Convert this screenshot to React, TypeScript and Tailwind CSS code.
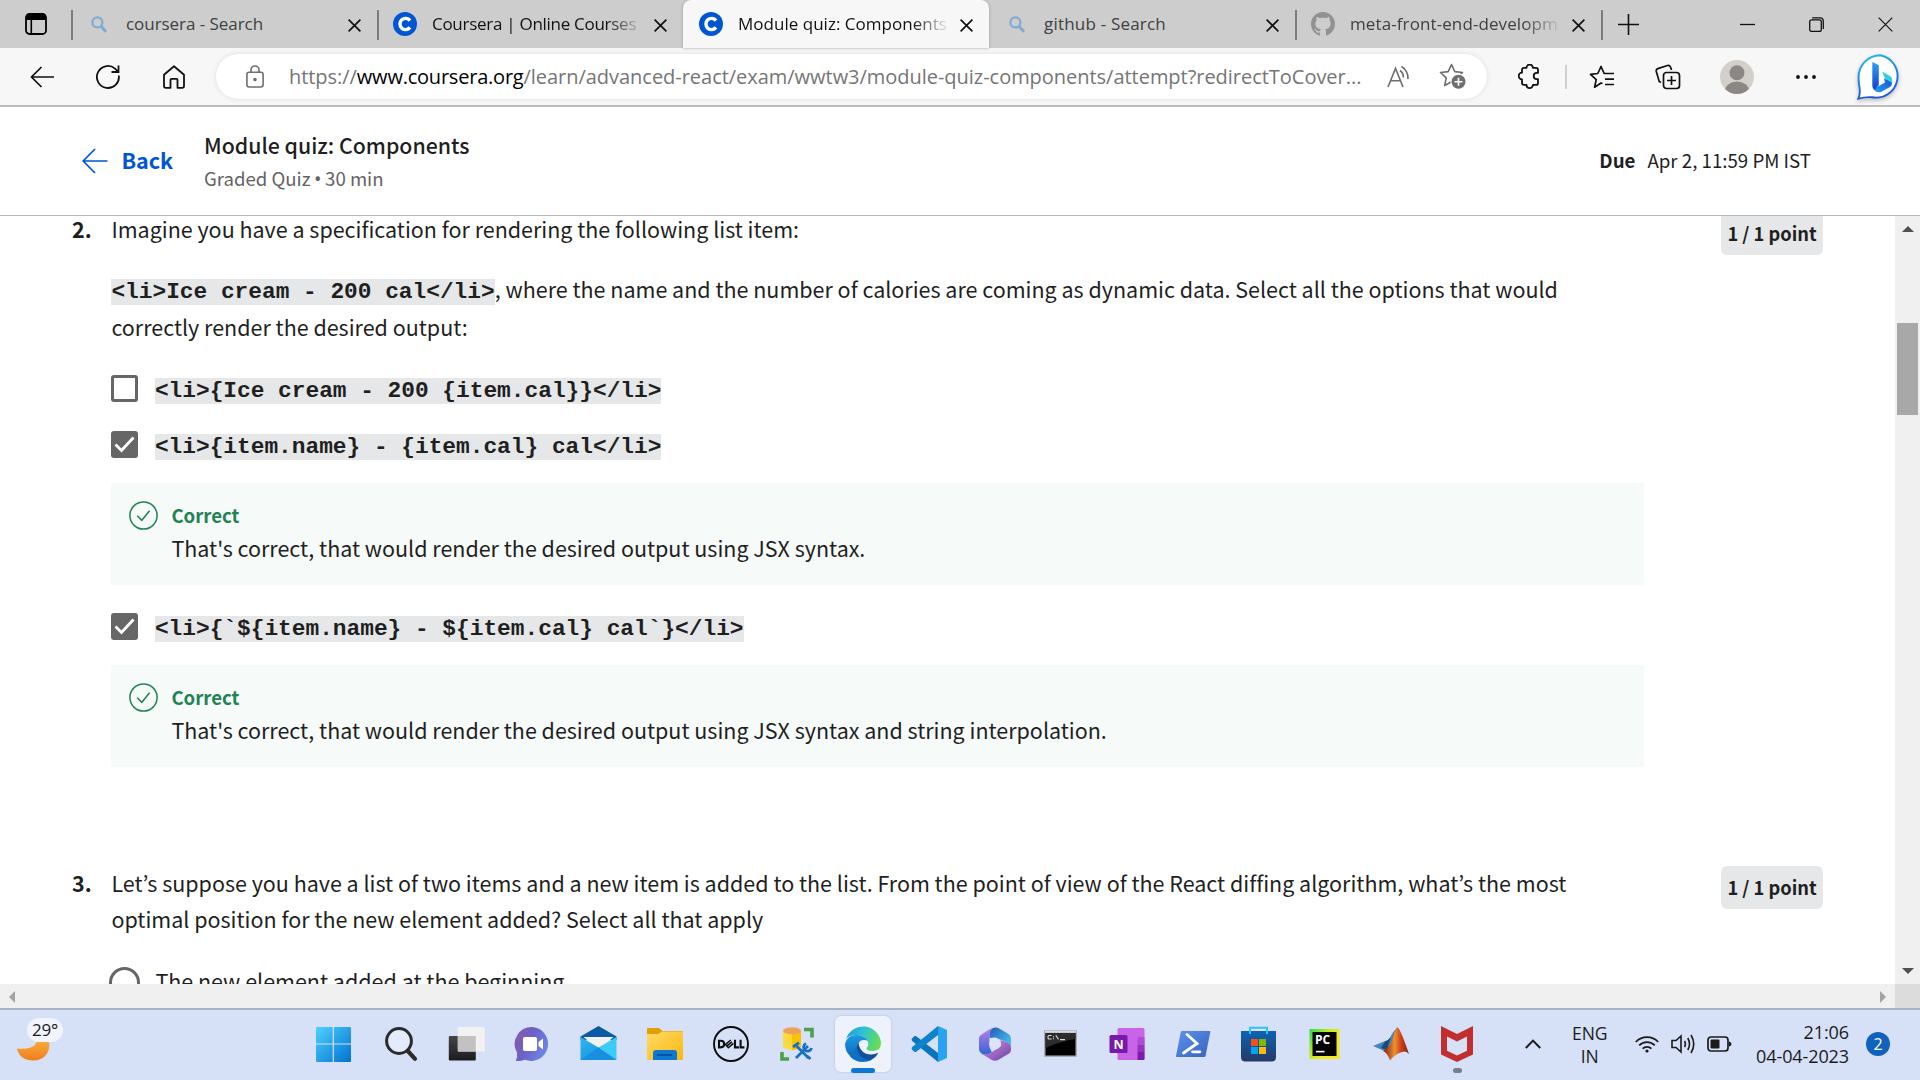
import React from "react";

const SANS = "font-['Noto_Sans_CJK_KR','Open_Sans',sans-serif]";
const UI = "font-['Open_Sans','Noto_Sans',sans-serif]";

function SearchGlyph() {
  return (
    <svg width="16" height="17" viewBox="0 0 16 17" fill="none" stroke="#7fabd3" strokeWidth="2.2" className="shrink-0">
      <circle cx="6.4" cy="6.4" r="5" />
      <path d="M10 10.3 15 15.8" strokeWidth="2.8" />
    </svg>
  );
}

function CourseraGlyph() {
  return (
    <svg width="24" height="24" viewBox="0 0 24 24" className="shrink-0">
      <circle cx="12" cy="12" r="12" fill="#0056d2" />
      <path d="M17 8.6A5.6 5.6 0 1 0 17 15.4" fill="none" stroke="#fff" strokeWidth="3.4" />
    </svg>
  );
}

function GithubGlyph() {
  return (
    <svg width="24" height="24" viewBox="0 0 16 16" fill="#8f9193" className="shrink-0">
      <path d="M8 0C3.58 0 0 3.58 0 8c0 3.54 2.29 6.53 5.47 7.59.4.07.55-.17.55-.38 0-.19-.01-.82-.01-1.49-2.01.37-2.53-.49-2.69-.94-.09-.23-.48-.94-.82-1.13-.28-.15-.68-.52-.01-.53.63-.01 1.08.58 1.23.82.72 1.21 1.87.87 2.33.66.07-.52.28-.87.51-1.07-1.78-.2-3.64-.89-3.64-3.95 0-.87.31-1.59.82-2.15-.08-.2-.36-1.02.08-2.12 0 0 .67-.21 2.2.82.64-.18 1.32-.27 2-.27s1.36.09 2 .27c1.53-1.04 2.2-.82 2.2-.82.44 1.1.16 1.92.08 2.12.51.56.82 1.27.82 2.15 0 3.07-1.87 3.75-3.65 3.95.29.25.54.73.54 1.48 0 1.07-.01 1.93-.01 2.2 0 .21.15.46.55.38A8.01 8.01 0 0 0 16 8c0-4.42-3.58-8-8-8z" />
    </svg>
  );
}

function CloseGlyph({ size = 13, sw = 1.7 }: { size?: number; sw?: number }) {
  return (
    <svg width={size} height={size} viewBox="0 0 13 13" stroke="#111" strokeWidth={sw} className="shrink-0">
      <path d="M.6.6 12.4 12.4M12.4.6.6 12.4" />
    </svg>
  );
}

type TabProps = { icon: React.ReactNode; title: string; track: string; dark?: boolean; active?: boolean; fade?: boolean; sep?: boolean };

function Tab({ icon, title, track, dark, active, fade, sep }: TabProps) {
  return (
    <div className={`relative flex h-12 w-[306px] items-center pl-4 pr-4 ${active ? "z-10 rounded-t-lg bg-[#f7f7f7] shadow-[0_0_3px_#999]" : ""}`}>
      {sep && <span className="absolute left-0 top-[10px] h-[30px] w-[1.5px] bg-[#7c7c7c]" />}
      <div className="flex w-6 shrink-0 items-center justify-start">{icon}</div>
      <div
        className={`ml-[15px] w-[212px] whitespace-nowrap text-[17px] leading-6 ${track} ${dark ? "text-[#111]" : "text-[#404040]"} ${fade ? "[mask-image:linear-gradient(to_right,#000_82%,transparent)]" : ""}`}
      >
        {title}
      </div>
      <div className="ml-auto pt-0.5">
        <CloseGlyph />
      </div>
    </div>
  );
}

function TabStrip() {
  return (
    <div className="flex h-12 bg-[#cdcdcd]">
      <div className="flex w-[71px] items-center pl-[25px]">
        <svg width="22" height="22" viewBox="0 0 22 22">
          <rect x="1" y="1" width="20" height="20" rx="3.5" fill="none" stroke="#000" strokeWidth="1.8" />
          <path d="M1 3.5Q1 1 4 1H18Q21 1 21 3.5V7H1Z" fill="#000" />
          <path d="M6.3 7V21" stroke="#000" strokeWidth="1.6" />
        </svg>
      </div>
      <Tab sep icon={<span className="pl-1"><SearchGlyph /></span>} title="coursera - Search" track="tracking-[-0.05px]" />
      <Tab sep icon={<CourseraGlyph />} title="Coursera | Online Courses" track="tracking-[-0.28px]" dark fade />
      <Tab active icon={<CourseraGlyph />} title="Module quiz: Components" track="tracking-[0.02px]" dark fade />
      <Tab icon={<span className="pl-1"><SearchGlyph /></span>} title="github - Search" track="tracking-[0.2px]" />
      <Tab sep icon={<GithubGlyph />} title="meta-front-end-developm" track="tracking-[0.1px]" fade />
      <div className="relative flex flex-1 items-center pl-[17px]">
        <span className="absolute left-0 top-[10px] h-[30px] w-[1.5px] bg-[#7c7c7c]" />
        <svg width="21" height="21" viewBox="0 0 21 21" stroke="#111" strokeWidth="1.6">
          <path d="M10.5 0V21M0 10.5H21" />
        </svg>
        <div className="ml-auto flex items-center gap-[54px] pr-[27px]">
          <svg width="15" height="15" viewBox="0 0 15 15" stroke="#111" strokeWidth="1.3"><path d="M0 7.5H15" /></svg>
          <svg width="15" height="15" viewBox="0 0 15 15" fill="none" stroke="#111" strokeWidth="1.3">
            <rect x=".7" y="2.9" width="11.6" height="11.6" rx="2" />
            <path d="M3.2.8H11Q14.3.8 14.3 4V12" />
          </svg>
          <CloseGlyph size={15} sw={1} />
        </div>
      </div>
    </div>
  );
}

const STAR = "M12.5 1.5 15.8 8.6 23.5 9.5 17.8 14.8 19.3 22.5 12.5 18.7 5.7 22.5 7.2 14.8 1.5 9.5 9.2 8.6Z";

function Toolbar() {
  return (
    <div className="flex h-[59px] items-center border-b-2 border-[#bbbcbd] bg-[#f7f7f7] pl-[30px]">
      <svg width="24" height="22" viewBox="0 0 24 22" fill="none" stroke="#111" strokeWidth="1.7" className="mr-[42px]">
        <path d="M24 11H1.5M11.5 1 1.5 11 11.5 21" />
      </svg>
      <svg width="24" height="24" viewBox="0 0 24 24" fill="none" stroke="#111" strokeWidth="1.8" className="mr-[43px]">
        <path d="M22.8 10.5A11 11 0 1 1 19 3.6L22 6.6M22.5 .5V7H15.5" />
      </svg>
      <svg width="22" height="24" viewBox="0 0 22 24" fill="none" stroke="#111" strokeWidth="1.8" strokeLinejoin="round" className="mr-[31px]">
        <path d="M1 9.8 11 1.2 21 9.8V21Q21 22.8 19.2 22.8H14.5V14.8Q14.5 13.8 13.5 13.8H8.5Q7.5 13.8 7.5 14.8V22.8H2.8Q1 22.8 1 21Z" />
      </svg>
      <div className="flex h-[45px] w-[1271px] items-center rounded-full bg-white pl-[30px] pr-[20px] shadow-[0_0_5px_#ddd]">
        <svg width="18" height="23" viewBox="0 0 18 23" fill="none" stroke="#6e6e6e" strokeWidth="1.6" className="mr-[25px]">
          <rect x=".9" y="7.2" width="16.2" height="14.8" rx="2.2" />
          <path d="M5 7V5A4 4 0 0 1 13 5V7" />
          <circle cx="9" cy="14.6" r="1" fill="#6e6e6e" />
        </svg>
        <div className="w-[1076px] whitespace-nowrap text-[20px] leading-7 tracking-[-0.03px] text-[#757575]">
          <span className="tracking-[-0.05px]">https://</span><span className="tracking-[-0.22px] text-black">www.coursera.org</span>/learn/advanced-react/exam/wwtw3/module-quiz-components/attempt?redirectToCover...
        </div>
        <svg width="24" height="24" viewBox="0 0 24 24" fill="none" stroke="#6e6e6e" strokeWidth="1.6" className="ml-[22px]">
          <path d="M1 22 8.5 3.5 16 22M3.6 15.8H13.4M13 5.5Q16.5 8 16.3 12.5M14.5 1.5Q21.5 6 21 14" />
        </svg>
        <svg width="28" height="27" viewBox="0 0 28 27" className="ml-[28px]">
          <path d={STAR} fill="none" stroke="#6e6e6e" strokeWidth="1.6" strokeLinejoin="round" />
          <circle cx="19.5" cy="18.7" r="8" fill="#fff" />
          <circle cx="19.5" cy="18.7" r="7" fill="#6e6e6e" />
          <path d="M19.5 14.7V22.7M15.5 18.7H23.5" stroke="#fff" strokeWidth="1.6" />
        </svg>
      </div>
      <div className="flex flex-1 items-center">
        <svg width="24" height="25" viewBox="0 0 24 25" fill="none" stroke="#111" strokeWidth="1.8" strokeLinejoin="round" className="ml-[31px]">
          <path d="M6 3.8H8.5A3.2 3.2 0 0 1 14.9 3.8H18Q20 3.8 20 5.8V8.9H18.8A3.1 3.1 0 0 0 18.8 15.1H20V18.9Q20 20.9 18 20.9H14.9A3.2 3.2 0 0 1 8.5 20.9H6Q4 20.9 4 18.9V15.3A3.3 3.3 0 0 1 4 8.7V5.8Q4 3.800 6 3.8Z" />
        </svg>
        <span className="ml-[23px] h-6 w-[1.5px] bg-[#cfcfcf]" />
        <svg width="26" height="24" viewBox="0 0 26 24" fill="none" stroke="#111" strokeWidth="1.7" strokeLinejoin="round" className="ml-[22px]">
          <path d="M13.5 18.5 12 18 5.6 22.2 7.2 14.6 1.5 9.3 8.8 8.5 12 1.5 15.2 8.5H25M16 14.2H25M16 19.5H25" />
        </svg>
        <svg width="26" height="26" viewBox="0 0 26 26" fill="none" stroke="#111" strokeWidth="1.7" className="ml-[40px]">
          <rect x="8.5" y="8.5" width="16" height="16" rx="3" />
          <path d="M16.5 12V21M12 16.5H21M6 18.5 4.2 17.5 1.3 7.5Q.8 5.3 2.8 4.6L12.5 1.5Q14.6 1 15.5 3L16.5 6" />
        </svg>
        <svg width="34" height="34" viewBox="0 0 34 34" className="ml-[39px]">
          <defs><clipPath id="av"><circle cx="17" cy="17" r="17" /></clipPath></defs>
          <g clipPath="url(#av)">
            <rect width="34" height="34" fill="#d3d0cc" />
            <circle cx="17" cy="12.8" r="7.5" fill="#8a8784" />
            <ellipse cx="17" cy="31" rx="12" ry="9.5" fill="#8a8784" />
          </g>
        </svg>
        <svg width="20" height="4" viewBox="0 0 20 4" fill="#111" className="ml-[42px]">
          <circle cx="2" cy="2" r="1.9" /><circle cx="10" cy="2" r="1.9" /><circle cx="18" cy="2" r="1.9" />
        </svg>
        <svg width="46" height="46" viewBox="0 0 46 46" className="ml-[41px] drop-shadow-[0_2px_2px_rgba(0,0,0,0.25)]">
          <defs>
            <linearGradient id="bg1" x1="0" y1="0" x2=".3" y2="1"><stop offset="0" stopColor="#1fc0f0" /><stop offset="1" stopColor="#1a55d8" /></linearGradient>
            <linearGradient id="bg2" x1="0" y1="0" x2="0" y2="1"><stop offset="0" stopColor="#2f9ff4" /><stop offset="1" stopColor="#1540d0" /></linearGradient>
            <linearGradient id="bg3" x1="0" y1="1" x2="1" y2="0"><stop offset="0" stopColor="#1fa0f0" /><stop offset="1" stopColor="#1b52d8" /></linearGradient>
          </defs>
          <path d="M23.3 1.2A21.3 21.3 0 1 1 15 43.2Q8 42.8 1.4 44.6 4 39 2 30.5 1.6 27 1.6 23A21.8 21.8 0 0 1 23.3 1.2Z" fill="#fff" stroke="url(#bg1)" strokeWidth="1.9" />
          <path d="M27 24.5 35 27.5Q35.5 31 33 33L24 38Q19 39 16.5 35L28 28.5Z" fill="url(#bg3)" />
          <path d="M25 17.5 33 22Q36.5 25 34.8 29 33 26.5 28.5 25.5Z" fill="#2fd0dc" />
          <path d="M15.3 8 21.8 11.3V31L17.5 36Q15.3 34.5 15.3 32Z" fill="url(#bg2)" />
        </svg>
      </div>
    </div>
  );
}

function QuizHeader() {
  return (
    <div className={`flex h-[109px] border-b border-[#bbb] bg-white pl-[82px] pr-[109px] text-[#1f1f1f] ${SANS}`}>
      <div className="flex w-[122px] items-center text-[#0056d2]">
        <svg width="26" height="26" viewBox="0 0 26 26" fill="none" stroke="#0056d2" strokeWidth="1.7">
          <path d="M25.5 13H1.2M13 1 1.2 13 13 25" />
        </svg>
        <span className="-mt-0.5 ml-[13.5px] text-[21.6px] font-bold leading-8 tracking-[-0.1px]">Back</span>
      </div>
      <div className="pt-[21px]">
        <div className="text-[21.3px] font-medium leading-[33px]">Module quiz: Components</div>
        <div className="text-[18.6px] leading-[33px] text-[#636363]">
          Graded Quiz<span className="px-[3.5px] font-['Open_Sans',sans-serif] text-[20px]">•</span>30 min
        </div>
      </div>
      <div className="-mt-0.5 ml-auto flex items-center text-[18.7px] leading-8">
        <span className="font-bold">Due</span>
        <span className="ml-3">Apr 2, 11:59 PM IST</span>
      </div>
    </div>
  );
}

function Code({ children }: { children: React.ReactNode }) {
  return (
    <code className="whitespace-pre bg-[#e5e7e8] font-['Liberation_Mono',monospace] text-[22.84px] font-bold leading-[26px]">
      {children}
    </code>
  );
}

function Checkbox({ checked }: { checked?: boolean }) {
  return (
    <span className={`flex size-[27px] shrink-0 items-center justify-center rounded-[3px] border-[3px] border-[#666] ${checked ? "bg-[#666]" : "bg-white"}`}>
      {checked && (
        <svg width="21" height="17" viewBox="0 0 21 17" fill="none" stroke="#fff" strokeWidth="2.8" className="shrink-0">
          <path d="M1.5 8.5 7.5 14.5 19.5 1.5" />
        </svg>
      )}
    </span>
  );
}

function Option({ checked, code }: { checked?: boolean; code: string }) {
  return (
    <div className="flex h-[27px] items-center">
      <Checkbox checked={checked} />
      <span className="ml-[16.5px] mt-[5px] flex h-[26px] bg-[#e5e7e8]"><Code>{code}</Code></span>
    </div>
  );
}

function Feedback({ text }: { text: string }) {
  return (
    <div className="flex h-[102px] w-[1533px] bg-[#f6faf9] pl-[18px]">
      <svg width="29" height="29" viewBox="0 0 29 29" fill="none" stroke="#1f8354" strokeWidth="1.5" className="mt-[18px]">
        <circle cx="14.5" cy="14.5" r="13.6" />
        <path d="M8.2 14.7 12.8 19.3 20.6 9.8" />
      </svg>
      <div className="ml-[13px] pt-[15px]">
        <div className="text-[18.6px] font-bold leading-[33px] text-[#1f8354]">Correct</div>
        <div className="text-[21.5px] leading-[33px]">{text}</div>
      </div>
    </div>
  );
}

function PointBadge() {
  return (
    <div className="flex h-[43px] w-[102px] shrink-0 items-center justify-center rounded-md bg-[#e5e7e8] pb-0.5 text-[18.3px] font-bold leading-8">
      1 / 1 point
    </div>
  );
}

function QuizBody() {
  return (
    <div className={`flex h-[768px] overflow-hidden bg-white text-[21.5px] tracking-[-0.01px] text-[#1f1f1f] ${SANS}`}>
      <div className="flex-1 overflow-hidden">
        <div className="flex h-[647px] pl-[72px] pr-[72px]">
          <div className="w-[39.4px] shrink-0 font-bold leading-[26px]">2.</div>
          <div className="flex-1">
            <p className="leading-[26px]">Imagine you have a specification for rendering the following list item:</p>
            <p className="mt-[28px] leading-[38px]">
              <Code>{"<li>Ice cream - 200 cal</li>"}</Code>, where the name and the number of calories are coming as dynamic data. Select all the options that would
              <br />
              correctly render the desired output:
            </p>
            <div className="mt-[29px]"><Option code="<li>{Ice cream - 200 {item.cal}}</li>" /></div>
            <div className="mt-[29px]"><Option checked code="<li>{item.name} - {item.cal} cal</li>" /></div>
            <div className="mt-[25px]"><Feedback text="That's correct, that would render the desired output using JSX syntax." /></div>
            <div className="mt-[28px]"><Option checked code="<li>{`${item.name} - ${item.cal} cal`}</li>" /></div>
            <div className="mt-[25px]"><Feedback text="That's correct, that would render the desired output using JSX syntax and string interpolation." /></div>
          </div>
          <div className="-mt-1"><PointBadge /></div>
        </div>
        <div className="flex pl-[72px] pr-[72px]">
          <div className="w-[39.4px] shrink-0 pt-0.5 font-bold leading-[36px]">3.</div>
          <div className="flex-1">
            <p className="whitespace-nowrap pt-0.5 leading-[36px]">
              Let’s suppose you have a list of two items and a new item is added to the list. From the point of view of the React diffing algorithm, what’s the most
              <br />
              optimal position for the new element added? Select all that apply
            </p>
            <div className="mt-[26px] flex items-start">
              <span className="-ml-[2px] mt-1 size-[31px] rounded-full border-[3px] border-[#666]" />
              <span className="ml-[15px] leading-[36px]">The new element added at the beginning</span>
            </div>
          </div>
          <div className="pt-[3px]"><PointBadge /></div>
        </div>
      </div>
      <div className="flex w-[25px] flex-col items-center bg-[#f0f0f0] pt-[10px] pb-[10px]">
        <svg width="12" height="6" viewBox="0 0 12 6" fill="#505050"><path d="M0 6 6 0 12 6Z" /></svg>
        <div className="mt-[91px] h-[92px] w-[21px] bg-[#a8a8a8]" />
        <svg width="12" height="6" viewBox="0 0 12 6" fill="#505050" className="mt-auto"><path d="M0 0 6 6 12 0Z" /></svg>
      </div>
    </div>
  );
}

function HorizontalScroll() {
  return (
    <div className="flex h-6 bg-[#f0f0f0]">
      <div className="flex flex-1 items-center justify-between pl-[9px] pr-[9px] pt-px">
        <svg width="6" height="12" viewBox="0 0 6 12" fill="#a3a3a3"><path d="M6 0 0 6 6 12Z" /></svg>
        <svg width="6" height="12" viewBox="0 0 6 12" fill="#a3a3a3"><path d="M0 0 6 6 0 12Z" /></svg>
      </div>
      <div className="w-[25px] bg-[#dcdcdc]" />
    </div>
  );
}

function G({ id, a, b, v }: { id: string; a: string; b: string; v?: boolean }) {
  return (
    <linearGradient id={id} x1="0" y1="0" x2={v ? "0" : "1"} y2="1">
      <stop offset="0" stopColor={a} />
      <stop offset="1" stopColor={b} />
    </linearGradient>
  );
}

const APPS: { name: string; active?: boolean; dot?: boolean; art: React.ReactNode }[] = [
  {
    name: "start",
    art: (
      <>
        <defs>
          <linearGradient id="win" gradientUnits="userSpaceOnUse" x1="0" y1="0" x2="36" y2="36"><stop offset="0" stopColor="#4fd3ff" /><stop offset="1" stopColor="#0070cf" /></linearGradient>
        </defs>
        <path d="M1 1H16.700V17.400H0V2Q0 1 1 1ZM17.900 1H34Q35 1 35 2V17.400H17.900ZM0 18.600H16.700V36H1Q0 36 0 35ZM17.900 18.600H35V35Q35 36 34 36H17.900Z" fill="url(#win)" />
      </>
    ),
  },
  {
    name: "search",
    art: (
      <g fill="none" stroke="#2b2b2b">
        <circle cx="17" cy="15" r="12.4" fill="#e4ebfb" strokeWidth="3" />
        <path d="M25.8 25 33 32.8" strokeWidth="4.2" strokeLinecap="round" />
      </g>
    ),
  },
  {
    name: "taskview",
    art: (
      <>
        <defs><G id="tv" a="#454545" b="#1c1c1c" v /></defs>
        <rect x="0.8" y="10" width="27" height="24.5" rx="1" fill="url(#tv)" />
        <rect x="9.8" y="1" width="27" height="24.5" rx="1" fill="#f2f2f2" />
        <rect x="9.8" y="10" width="18" height="15.5" fill="#c2c2c2" />
      </>
    ),
  },
  {
    name: "chat",
    art: (
      <>
        <defs>
          <linearGradient id="chat" x1="0" y1=".1" x2="1" y2=".6"><stop offset="0" stopColor="#8a5aa8" /><stop offset=".5" stopColor="#6a62c8" /><stop offset="1" stopColor="#6e86e8" /></linearGradient>
        </defs>
        <path d="M18.500 1A17 17 0 1 1 11 33.800Q6 35.500 1.800 35 3.800 31 3 26.500A17 17 0 0 1 18.500 1Z" fill="url(#chat)" />
        <rect x="9" y="11" width="14" height="14" rx="1.8" fill="#fff" />
        <path d="M24.500 16 29 12.600V23.400L24.500 20Z" fill="#fff" />
      </>
    ),
  },
  {
    name: "mail",
    art: (
      <>
        <defs><G id="ml" a="#2fb8f2" b="#1286dc" /></defs>
        <path d="M.500 10.500 18.500 0 36.500 10.500V14H.5Z" fill="#0a5aa6" />
        <path d="M3.500 11H33.500L18.500 24Z" fill="#f1f1f1" />
        <path d="M.500 11 18.500 21.600 36.500 34H.5Z" fill="url(#ml)" />
        <path d="M36.500 11V34L18.500 21.600Z" fill="#3ccbf7" />
        <path d="M18.500 21.600 36.500 34H.5Z" fill="#1a8fe0" />
      </>
    ),
  },
  {
    name: "explorer",
    art: (
      <>
        <defs><G id="fx" a="#ffd968" b="#fbb80c" /></defs>
        <path d="M0 3Q0 2 1 2H12L15.5 5H35Q36 5 36 6V10H0Z" fill="#e0a000" />
        <path d="M0 8H11L15 5.6H36V33Q36 34 35 34H1Q0 34 0 33Z" fill="url(#fx)" />
        <path d="M6 34V27Q6 24 9 24H27Q30 24 30 27V34Z" fill="#0c78cf" />
        <path d="M10 29H25" stroke="#06509a" strokeWidth="1.8" />
      </>
    ),
  },
  {
    name: "dell",
    art: (
      <>
        <circle cx="18" cy="18" r="17" fill="none" stroke="#0d0d0d" strokeWidth="1.9" />
        <g fill="none" stroke="#0d0d0d" strokeWidth="2.1">
          <path d="M6 14.7H7.6Q11.2 14.7 11.2 18T7.6 21.4H6Z" />
          <path d="M12 18.8 17.8 14M13.4 20.4 19 15.8M15 22 20.5 17.4M12.3 18.3 15.6 22" strokeWidth="1.5" />
          <path d="M22 13.8V21.4H26M27.6 13.8V21.4H31.4" />
        </g>
      </>
    ),
  },
  {
    name: "database",
    art: (
      <>
        <path d="M25 3.5H33V11.5M3 26V33H10" fill="none" stroke="#4ba04b" strokeWidth="3.6" />
        <path d="M4 5V21Q13 27 22 21V5Z" fill="#ffd93b" />
        <path d="M13 6V24Q19 23.6 22 21V5Z" fill="#f8c400" />
        <ellipse cx="13" cy="4.8" rx="9" ry="3.6" fill="#eda25a" />
        <path d="M17 32 29 20M29.5 32 17.5 20" stroke="#1a6fc4" strokeWidth="2.8" />
        <path d="M14 21 20 16.6M27 17.5A4 4 0 1 0 32.5 22M28 30 31.5 33" stroke="#1a6fc4" strokeWidth="2.8" fill="none" />
      </>
    ),
  },
  {
    name: "edge",
    active: true,
    art: (
      <>
        <defs>
          <linearGradient id="eg1" x1="0" y1=".3" x2="1" y2=".6"><stop offset="0" stopColor="#1f9fe0" /><stop offset=".45" stopColor="#30c3d2" /><stop offset="1" stopColor="#66e048" /></linearGradient>
          <G id="eg2" a="#1b9de2" b="#0a62b8" v />
        </defs>
        <path d="M1 13A18 18 0 0 1 36 16Q36.5 24.5 28 25 21 25 21.5 22 24 19.5 23 16 20 9 11 9 4 9 1 13Z" fill="url(#eg1)" />
        <path d="M0 18Q2 9 11 9 19 9 22.5 14.5 16 12.5 13.5 17 10.5 24 18 30 10 37 5 30 0 25 0 18Z" fill="url(#eg2)" />
        <path d="M13.5 16.5Q9 25 15.5 31.5 20 35.5 26 34 31 31.5 33.3 26.8 27 30 20.5 27.5 14 24 13.5 16.5Z" fill="#10509c" />
        <path d="M5 30Q10 36 18 36 22.5 36 26.5 34 19.5 34 15.5 30 12 26 12 20Z" fill="#0f6fc6" />
      </>
    ),
  },
  {
    name: "vscode",
    art: (
      <>
        <path d="M1 12.5 3.2 10.3Q4.2 9.6 5.3 10.3L27 27V36L1.2 15Q0 13.8 1 12.5Z" fill="#0a74bd" />
        <path d="M1 23.5 3.2 25.7Q4.2 26.4 5.3 25.7L27 9V0L1.2 21Q0 22.2 1 23.5Z" fill="#0c83cc" />
        <path d="M27 0 36 4V32L27 36Z" fill="#27a3f2" />
      </>
    ),
  },
  {
    name: "m365",
    art: (
      <>
        <defs>
          <G id="m1" a="#c07de8" b="#2f66d6" v />
          <G id="m2" a="#2458b8" b="#48d2f4" />
          <G id="m3" a="#d696f2" b="#6a3f9c" />
        </defs>
        <path d="M4.5 8.5 13 3Q16 1.4 19 1.5 12.5 5 12.5 12V21L16 29 6 28.5Q2 26 2 23V12Q2 10 4.5 8.5Z" fill="url(#m1)" />
        <path d="M12.5 12Q12.5 1 19 1.5 21.5 1.8 23 3L31.5 8Q34 10 34 12.5V21Q33 17 28 15.5L18 11.5Z" fill="url(#m2)" />
        <path d="M23.5 14 30 16.2Q34 18 34 22V24Q34 26 32 27.5L22 33.6Q18 36 14 33.6L5 28Q10 29.5 15 26L24 20Z" fill="url(#m3)" />
        <circle cx="18" cy="17.6" r="5.8" fill="#dbe4f9" />
      </>
    ),
  },
  {
    name: "cmd",
    art: (
      <>
        <rect x="1" y="4" width="33" height="27" rx="1" fill="#a8adb5" />
        <rect x="2" y="4.6" width="31" height="2" fill="#d8dce2" />
        <rect x="2.5" y="7" width="30" height="22.5" fill="#000" />
        <path d="M2.500 7H32.500V13Q18 15 2.500 22Z" fill="#2c2c2c" />
        <path d="M8.6 9.5H6Q5 9.5 5 10.5V12Q5 13 6 13H8.6M10.5 10.2V11.2M10.5 12.3V13.2M12.8 9.2 15.5 13.4M17 13.6H22" fill="none" stroke="#ddd" strokeWidth="1.1" />
      </>
    ),
  },
  {
    name: "onenote",
    art: (
      <>
        <rect x="8.500" y="2" width="27" height="32" rx="1.5" fill="#c964e8" />
        <rect x="28.500" y="11" width="7" height="8" fill="#ae4cd6" />
        <rect x="28.500" y="19" width="7" height="7" fill="#9433bb" />
        <path d="M28.500 26H35.500V32.500Q35.500 34 34 34H28.500Z" fill="#7a1dab" />
        <rect x="0.500" y="9" width="18" height="18" rx="1.5" fill="#7719aa" />
        <text x="9.500" y="22.5" textAnchor="middle" fontSize="12.5" fontWeight="700" fill="#fff" fontFamily="Open Sans">N</text>
      </>
    ),
  },
  {
    name: "powershell",
    art: (
      <>
        <defs><G id="ps" a="#5a92ee" b="#3a62be" /></defs>
        <path d="M7 5H34.6Q35.6 5 35.3 6L30.5 30Q30.2 31 29.2 31H1.8Q.8 31 1 30L5.8 6Q6 5 7 5Z" fill="url(#ps)" />
        <path d="M12 8.5 22 17.5 8.5 27M17.5 25.8H25" fill="none" stroke="#fff" strokeWidth="2.8" strokeLinecap="round" />
      </>
    ),
  },
  {
    name: "store",
    art: (
      <>
        <defs><G id="st" a="#0d63b4" b="#243a66" v /></defs>
        <path d="M9 8V1.800H26V8" fill="none" stroke="#2cc4f4" strokeWidth="2" />
        <path d="M0 5H35V31Q35 35.500 30.500 35.500H4.500Q0 35.500 0 31Z" fill="url(#st)" />
        <path d="M9 5V8M26 5V8" stroke="#2cc4f4" strokeWidth="2" />
        <path d="M10 13H17V20H10Z" fill="#f25022" /><path d="M18 13H25V20H18Z" fill="#7fba00" />
        <path d="M10 21H17V28H10Z" fill="#00a4ef" /><path d="M18 21H25V28H18Z" fill="#ffb900" />
      </>
    ),
  },
  {
    name: "pycharm",
    art: (
      <>
        <defs>
          <linearGradient id="pc" x1="0" y1="0" x2=".7" y2=".5"><stop offset="0" stopColor="#1fe04a" /><stop offset=".6" stopColor="#b8ea20" /><stop offset="1" stopColor="#f0ea24" /></linearGradient>
        </defs>
        <rect x="2.5" y="3" width="30" height="30" fill="url(#pc)" />
        <rect x="5.5" y="6" width="24" height="24" fill="#050505" />
        <text x="8" y="17.6" fontSize="12" fontWeight="700" fill="#fff" fontFamily="Open Sans">PC</text>
        <path d="M9 25.6H17.5" stroke="#fff" strokeWidth="1.6" />
      </>
    ),
  },
  {
    name: "matlab",
    art: (
      <>
        <defs>
          <linearGradient id="mt" x1="0" y1="0" x2="1" y2="0"><stop offset="0" stopColor="#7a1a1a" /><stop offset=".45" stopColor="#f0902c" /><stop offset=".7" stopColor="#c9401c" /><stop offset="1" stopColor="#8c2014" /></linearGradient>
        </defs>
        <path d="M-1 20 10 15.500Q14 15 16 12 19 5 23.500 1.500 20 18 10.500 25Z" fill="#3f86bd" />
        <path d="M11 15.400Q15 14.500 17 10L13 24 7 22Z" fill="#234a72" />
        <path d="M23.500 1.200Q26.500 3 35 28 31.500 24.500 28 26 21 28 16 34.500 13.500 27 9 25 16 22 19 11 21 3 23.500 1.200Z" fill="url(#mt)" />
      </>
    ),
  },
  {
    name: "mcafee",
    dot: true,
    art: <path d="M1 0 17 8 33 0V28.500L17 36 1 28.500ZM7 10.500V24.700L17 29.600 27 24.700V10.500L17 15.500Z" fill="#c22e2e" fillRule="evenodd" />,
  },
];

function Taskbar() {
  return (
    <div className={`flex h-[72px] border-t-2 border-[#aab3c6] bg-[#d6e0f7] text-[#1b1b1b] ${UI}`}>
      <div className="w-[301px]">
        <div className="relative ml-4 mt-3 h-10 w-12">
          <svg width="36" height="34" viewBox="0 0 36 34" className="absolute left-0 top-[5px]">
            <defs><G id="moon" a="#ffc04a" b="#ef7d1c" v /></defs>
            <path d="M21 5Q25 24 .8 21.5 4 33.5 17.5 33.5 32 33 33.5 18 32 9 21 5Z" fill="url(#moon)" />
          </svg>
          <span className="absolute -top-1 left-[11px] flex h-[24px] w-[36px] items-center justify-center rounded-full bg-[#f1f4fc] text-[17px] leading-5 tracking-[-0.3px]">29°</span>
        </div>
      </div>
      {APPS.map((app) => (
        <div key={app.name} className="relative flex h-[68px] w-[66.1px] items-center justify-center">
          {app.active && <span className="absolute left-[5px] top-[6px] h-14 w-14 rounded-md bg-[#edf2fc] shadow-[0_0_2px_#aab4cc]" />}
          <svg width="36" height="36" viewBox="0 0 36 36" className="relative overflow-visible">{app.art}</svg>
          {app.active && <span className="absolute left-[21px] top-[58px] h-[5px] w-6 rounded-full bg-[#0a78d4]" />}
          {app.dot && <span className="absolute left-[28px] top-[58px] h-[5px] w-[9px] rounded-full bg-[#757f8f]" />}
        </div>
      ))}
      <div className="flex h-[68px] flex-1 items-center">
        <svg width="16" height="10" viewBox="0 0 16 10" fill="none" stroke="#1b1b1b" strokeWidth="2" className="ml-[34px]"><path d="M.8 9 8 1.6 15.2 9" /></svg>
        <div className="ml-[30px] w-[38px] pt-0.5 text-center text-[17.5px] leading-[23px] tracking-[-0.1px]">ENG<br />IN</div>
        <svg width="24" height="18" viewBox="0 0 24 18" fill="none" stroke="#1b1b1b" strokeWidth="1.7" className="ml-[26px]">
          <path d="M.8 7A15.5 15.5 0 0 1 23.2 7M4.2 10.4A10.8 10.8 0 0 1 19.8 10.4M7.6 13.6A6.3 6.3 0 0 1 16.4 13.6" />
          <circle cx="12" cy="16" r="1.6" fill="#1b1b1b" stroke="none" />
        </svg>
        <svg width="25" height="20" viewBox="0 0 25 20" fill="none" stroke="#1b1b1b" strokeWidth="1.6" className="ml-[12px]">
          <path d="M1 6.5H5L10 2V18L5 13.5H1ZM13.5 7Q15.3 10 13.5 13M16.8 4Q20.2 10 16.8 16M20 1Q25.5 10 20 19" />
        </svg>
        <svg width="25" height="16" viewBox="0 0 25 16" className="ml-[11px]">
          <rect x="1" y="1" width="20" height="14" rx="3" fill="none" stroke="#1b1b1b" strokeWidth="1.7" />
          <rect x="3.5" y="3.5" width="9" height="9" rx="1" fill="#1b1b1b" />
          <path d="M22 5.5Q24.5 6 24.5 8T22 10.5Z" fill="#1b1b1b" />
        </svg>
        <div className="-mt-px ml-auto text-right text-[18px] leading-[24px] tracking-[-0.1px]">21:06<br />04-04-2023</div>
        <span className="ml-[17px] mr-[30px] flex size-6 items-center justify-center rounded-full bg-[#0f63bd] text-[16px] leading-5 text-white">2</span>
      </div>
    </div>
  );
}

export default function App() {
  return (
    <div className={`h-[1080px] w-[1920px] overflow-hidden bg-white ${UI}`}>
      <TabStrip />
      <Toolbar />
      <QuizHeader />
      <QuizBody />
      <HorizontalScroll />
      <Taskbar />
    </div>
  );
}
